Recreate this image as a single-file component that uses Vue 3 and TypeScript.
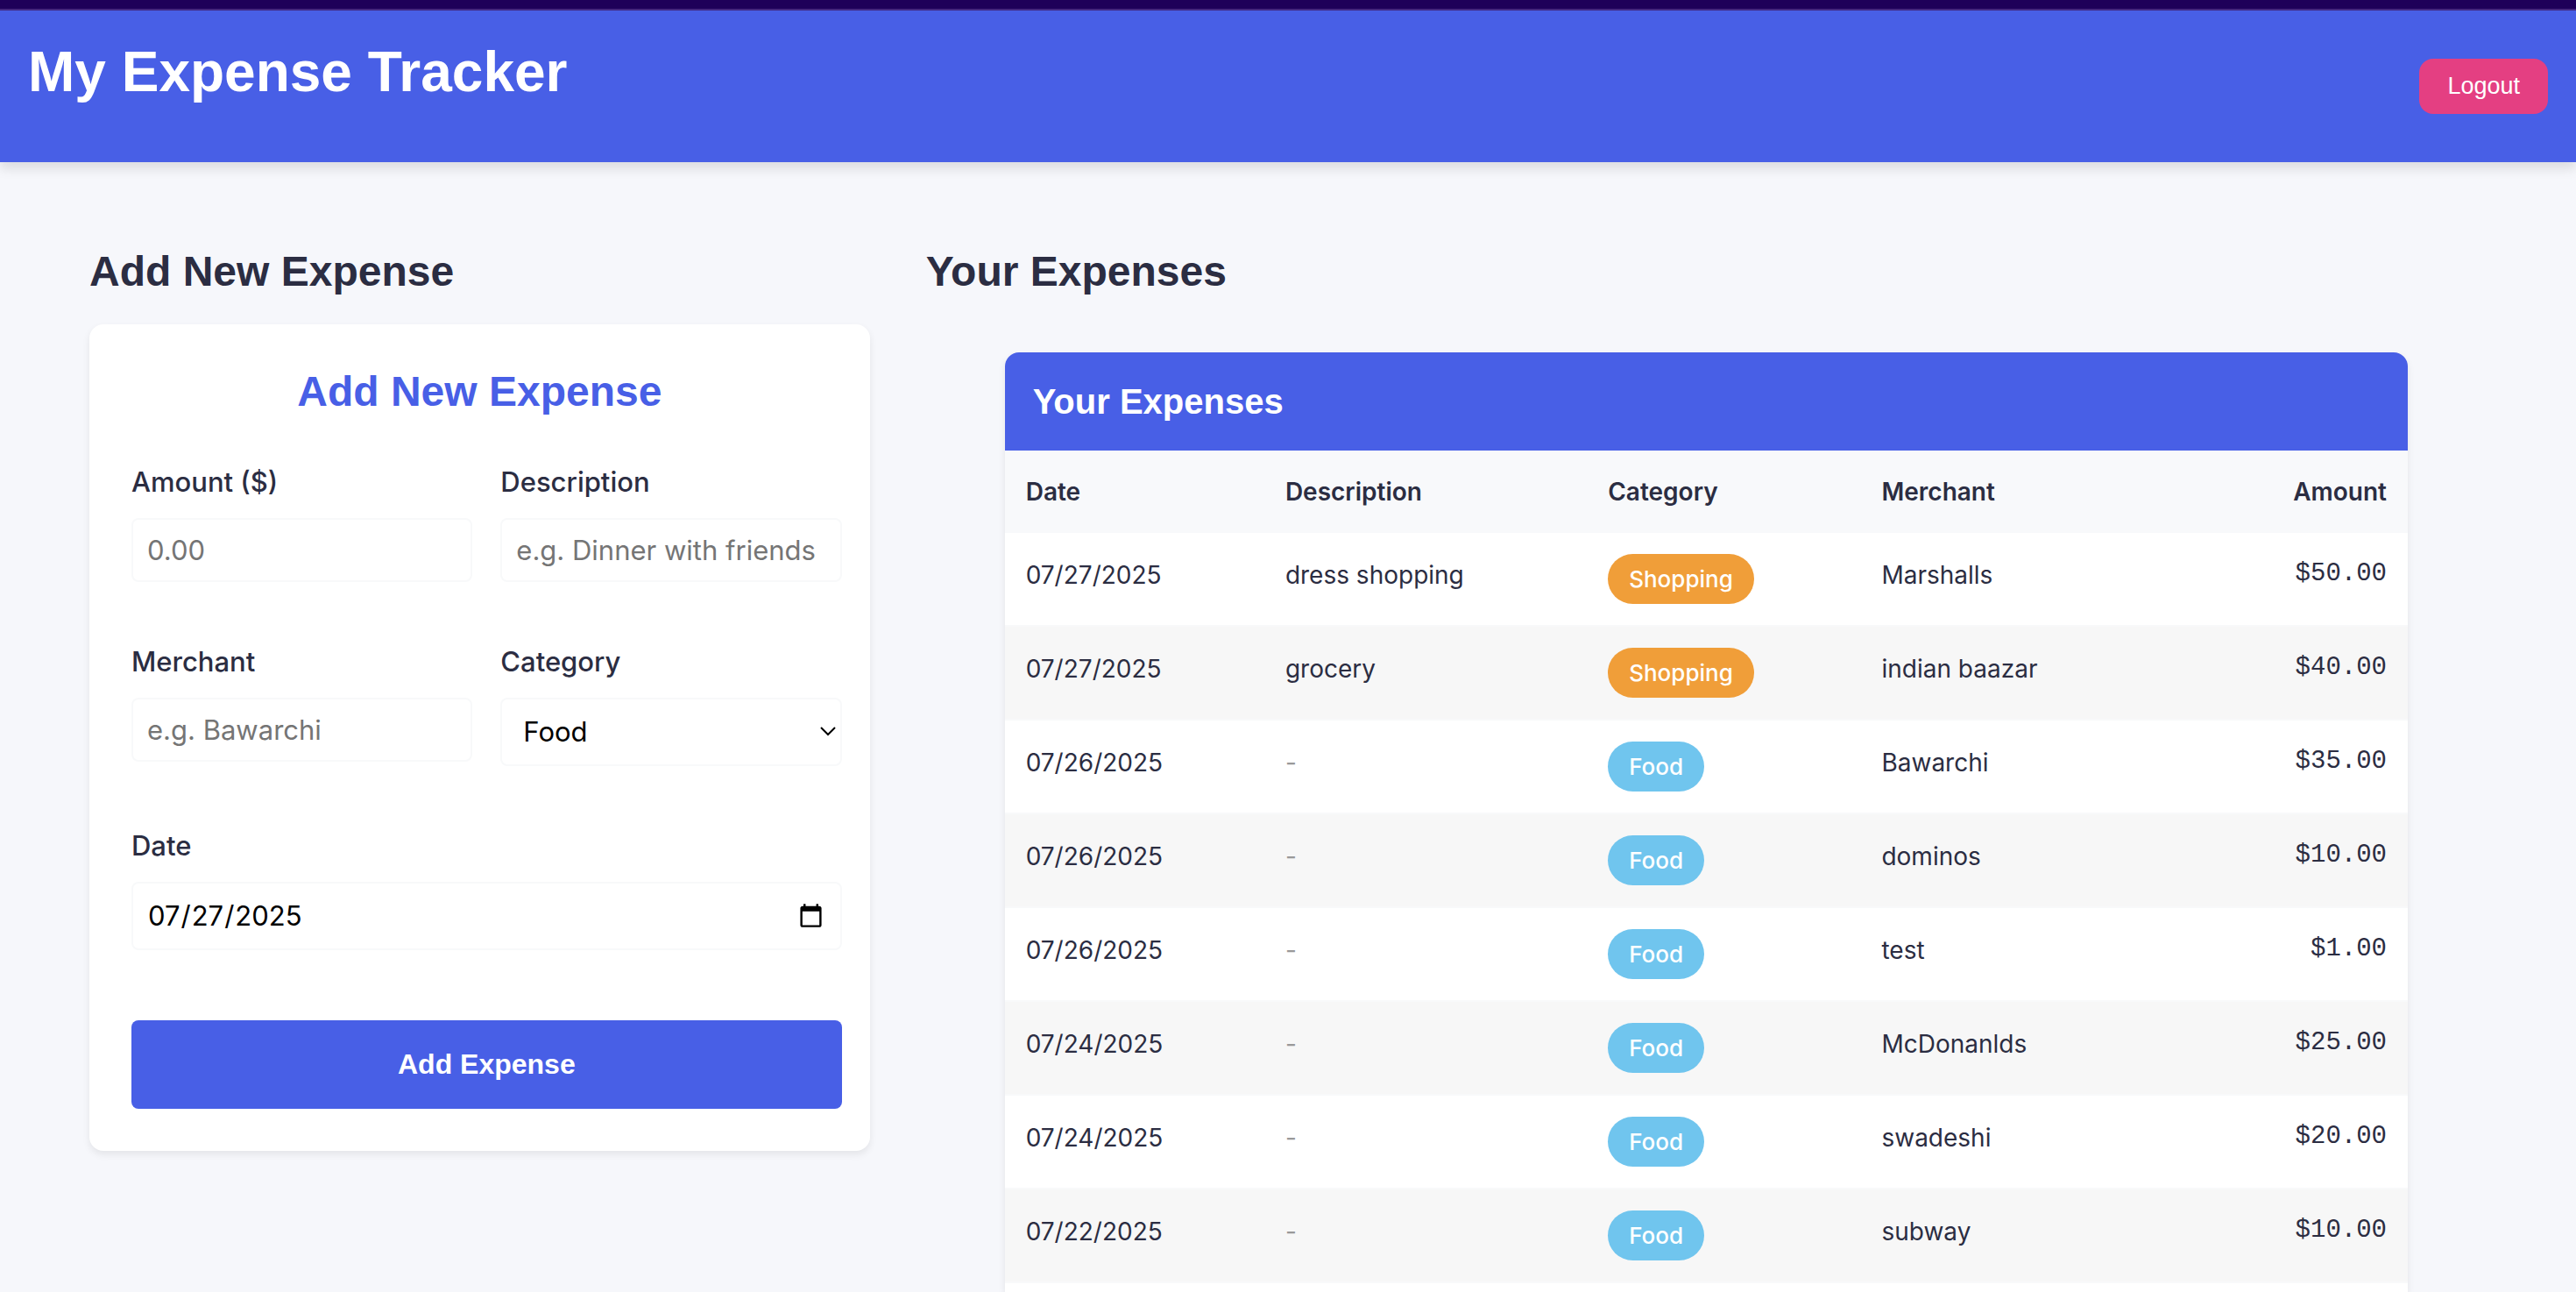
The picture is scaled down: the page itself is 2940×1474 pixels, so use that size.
<script setup lang="ts">
import { ref } from 'vue'

interface Expense {
  date: string
  description: string
  category: 'Shopping' | 'Food'
  merchant: string
  amount: number
}

const amount = ref('')
const description = ref('')
const merchant = ref('')
const category = ref('Food')
const date = ref('2025-07-27')

const categories = ['Food', 'Shopping', 'Travel', 'Bills', 'Other']

const expenses = ref<Expense[]>([
  { date: '07/27/2025', description: 'dress shopping', category: 'Shopping', merchant: 'Marshalls', amount: 50 },
  { date: '07/27/2025', description: 'grocery', category: 'Shopping', merchant: 'indian baazar', amount: 40 },
  { date: '07/26/2025', description: '', category: 'Food', merchant: 'Bawarchi', amount: 35 },
  { date: '07/26/2025', description: '', category: 'Food', merchant: 'dominos', amount: 10 },
  { date: '07/26/2025', description: '', category: 'Food', merchant: 'test', amount: 1 },
  { date: '07/24/2025', description: '', category: 'Food', merchant: 'McDonanlds', amount: 25 },
  { date: '07/24/2025', description: '', category: 'Food', merchant: 'swadeshi', amount: 20 },
  { date: '07/22/2025', description: '', category: 'Food', merchant: 'subway', amount: 10 },
])
</script>

<template>
  <div class="page">
    <header class="topbar">
      <h1>My Expense Tracker</h1>
      <button type="button" class="logout">Logout</button>
    </header>

    <main class="content">
      <section class="entry">
        <h2>Add New Expense</h2>
        <form class="card" @submit.prevent>
          <h2 class="card-title">Add New Expense</h2>
          <div class="fields">
            <div class="field">
              <label for="amount">Amount ($)</label>
              <input id="amount" v-model="amount" type="text" inputmode="decimal" placeholder="0.00" />
            </div>
            <div class="field">
              <label for="description">Description</label>
              <input id="description" v-model="description" type="text" placeholder="e.g. Dinner with friends" />
            </div>
            <div class="field">
              <label for="merchant">Merchant</label>
              <input id="merchant" v-model="merchant" type="text" placeholder="e.g. Bawarchi" />
            </div>
            <div class="field">
              <label for="category">Category</label>
              <div class="select-wrap">
                <select id="category" v-model="category">
                  <option v-for="c in categories" :key="c">{{ c }}</option>
                </select>
                <svg class="chevron" viewBox="0 0 20 12" aria-hidden="true">
                  <path d="M2 2 L10 10 L18 2" fill="none" stroke="#000" stroke-width="2" />
                </svg>
              </div>
            </div>
            <div class="field wide">
              <label for="date">Date</label>
              <input id="date" v-model="date" type="date" />
            </div>
          </div>
          <button type="submit" class="submit">Add Expense</button>
        </form>
      </section>

      <section class="list">
        <h2>Your Expenses</h2>
        <div class="panel">
          <h3>Your Expenses</h3>
          <table>
            <colgroup>
              <col class="c-date" />
              <col class="c-desc" />
              <col class="c-cat" />
              <col class="c-merch" />
              <col />
            </colgroup>
            <thead>
              <tr>
                <th>Date</th>
                <th>Description</th>
                <th>Category</th>
                <th>Merchant</th>
                <th class="right">Amount</th>
              </tr>
            </thead>
            <tbody>
              <tr v-for="(e, i) in expenses" :key="i">
                <td>{{ e.date }}</td>
                <td>
                  <template v-if="e.description">{{ e.description }}</template>
                  <span v-else class="none">-</span>
                </td>
                <td><span class="badge" :class="e.category.toLowerCase()">{{ e.category }}</span></td>
                <td>{{ e.merchant }}</td>
                <td class="right money">${{ e.amount.toFixed(2) }}</td>
              </tr>
            </tbody>
          </table>
        </div>
      </section>
    </main>
  </div>
</template>

<style>
body {
  margin: 0;
  background: #f6f7fb;
}
</style>

<style scoped>
*,
*::before,
*::after {
  box-sizing: border-box;
}

.page {
  min-height: 100vh;
  display: flex;
  flex-direction: column;
  background: #f6f7fb;
  color: #2b2d42;
  font-family: Inter, 'Noto Sans', sans-serif;
}

h1,
h2,
h3 {
  margin: 0;
  font-family: 'Liberation Sans', Arial, sans-serif;
  font-weight: 700;
}

.topbar {
  display: flex;
  justify-content: space-between;
  align-items: flex-start;
  padding: 34px 32px 55px;
  border-top: 10px solid #1e0059;
  background: #485fe6;
  box-shadow:
    inset 0 2px #43277f,
    0 8px 12px rgba(0, 0, 0, 0.1);
}

h1 {
  color: #fff;
  font-size: 64px;
  line-height: 77px;
}

.logout {
  margin-top: 23px;
  padding: 16px 32px;
  border: 0;
  border-radius: 16px;
  background: #e43f82;
  color: #fff;
  font: 27px/31px 'Liberation Sans', Arial, sans-serif;
}

.content {
  flex: 1;
  display: grid;
  grid-template-columns: minmax(0, 1fr) minmax(0, 2fr);
  gap: 64px;
  padding: 97px 102px 0;
}

h2 {
  font-size: 48px;
  line-height: 56px;
}

.card {
  margin-top: 32px;
  padding: 48px 32px 48px 48px;
  border-radius: 16px;
  background: #fff;
  box-shadow: 0 4px 8px rgba(0, 0, 0, 0.08);
}

.card-title {
  margin-right: 16px;
  color: #485fe6;
  line-height: 58px;
  text-align: center;
}

.fields {
  display: grid;
  grid-template-columns: 1fr 1fr;
  column-gap: 32px;
  margin-top: 55px;
}

.field {
  display: flex;
  flex-direction: column;
  gap: 22px;
  margin-bottom: 72px;
}

.wide {
  grid-column: 1 / -1;
  margin-bottom: 80px;
}

label {
  font-size: 31px;
  line-height: 38px;
  font-weight: 500;
}

input,
select {
  display: block;
  width: 100%;
  height: 73px;
  padding: 0 16px;
  border: 2px solid #f8f9fa;
  border-radius: 8px;
  background: #fff;
  color: #000;
  font: 31px/38px Inter, 'Noto Sans', sans-serif;
}

input::placeholder {
  color: #757575;
  opacity: 1;
}

select {
  height: 78px;
  padding: 0 24px;
  appearance: none;
}

input[type='date'] {
  height: 78px;
}

.select-wrap {
  position: relative;
}

.chevron {
  position: absolute;
  top: 32px;
  right: 6px;
  width: 20px;
  height: 12px;
  pointer-events: none;
}

.submit {
  width: 100%;
  padding: 32px;
  border: 0;
  border-radius: 8px;
  background: #485fe6;
  color: #fff;
  font: 700 32px/37px 'Liberation Sans', Arial, sans-serif;
}

.list {
  display: flex;
  flex-direction: column;
}

.panel {
  flex: 1;
  margin: 64px 90px 0;
  border-radius: 16px 16px 0 0;
  overflow: hidden;
  background: #fff;
  box-shadow: 0 4px 8px rgba(0, 0, 0, 0.08);
}

h3 {
  padding: 32px;
  background: #485fe6;
  color: #fff;
  font-size: 40px;
  line-height: 48px;
}

table {
  width: 100%;
  table-layout: fixed;
  border-collapse: separate;
  border-spacing: 0;
}

.c-date {
  width: 18.5%;
}

.c-desc {
  width: 23%;
}

.c-cat {
  width: 19.5%;
}

.c-merch {
  width: 23%;
}

th,
td {
  padding: 24px;
  text-align: left;
  vertical-align: top;
  font-size: 28px;
  line-height: 46px;
}

th {
  background: #f8f9fb;
  font-weight: 600;
}

td {
  height: 107px;
  border-bottom: 2px solid #f8f9fa;
  line-height: 48px;
}

tbody tr:nth-child(even) {
  background: #f7f7f7;
}

.right {
  text-align: right;
}

.money {
  font-family: 'Liberation Mono', 'Courier New', monospace;
  font-size: 29px;
  line-height: 46px;
}

.none {
  color: #999;
}

.badge {
  display: block;
  width: fit-content;
  padding: 12px 24px;
  border-radius: 40px;
  color: #fff;
  font-size: 26px;
  line-height: 33px;
  font-weight: 500;
}

.shopping {
  background: #f09e39;
}

.food {
  background: #70c5ee;
}
</style>
